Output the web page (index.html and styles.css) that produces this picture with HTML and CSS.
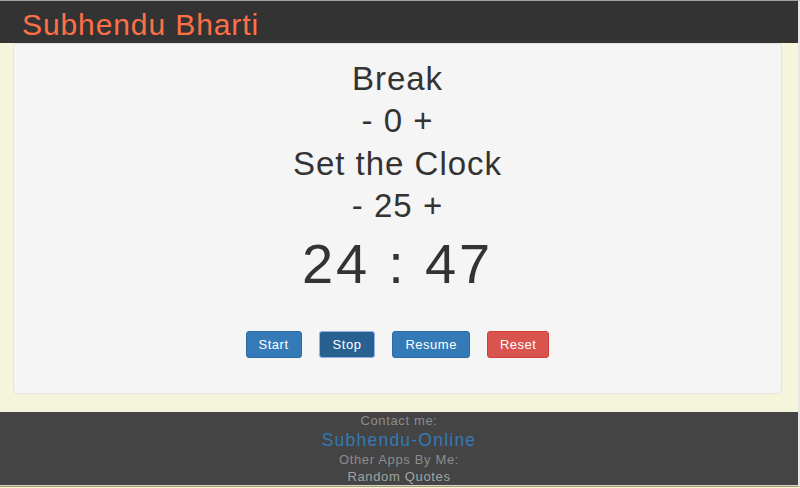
FILE: index.html
```html
<!DOCTYPE html>
<html lang="en">
<head>
<meta charset="utf-8">
<title>Subhendu Bharti - Pomodoro Clock</title>
<link rel="stylesheet" href="styles.css">
</head>
<body>
<header class="topbar">
  <span class="brand">Subhendu Bharti</span>
</header>
<main class="well">
  <div class="label">Break</div>
  <div class="counter"><span class="ctl">-</span> <span class="val">0</span> <span class="ctl">+</span></div>
  <div class="label">Set the Clock</div>
  <div class="counter"><span class="ctl">-</span> <span class="val">25</span> <span class="ctl">+</span></div>
  <div class="clock">24 : 47</div>
  <div class="controls">
    <button class="btn btn-primary">Start</button>
    <button class="btn btn-primary btn-active">Stop</button>
    <button class="btn btn-primary">Resume</button>
    <button class="btn btn-danger">Reset</button>
  </div>
</main>
<footer class="footer">
  <div class="small">Contact me:</div>
  <div class="link-line"><a class="link" href="#">Subhendu-Online</a></div>
  <div class="small">Other Apps By Me:</div>
  <div class="small light">Random Quotes</div>
</footer>
</body>
</html>
```
FILE: styles.css
```css
html {
  background: #f5f5dc;
}
body {
  margin: 0;
  background: #f5f5dc;
  border-top: 1px solid #a0a0a0;
  border-right: 2px solid #e6e6e6;
  border-bottom: 1px solid #a39a5c;
  font-family: "Liberation Sans", Arial, sans-serif;
  color: #333;
}
.topbar {
  height: 42px;
  box-sizing: border-box;
  padding: 6px 0 0 22px;
  background: #333;
}
.brand {
  display: block;
  font-size: 30px;
  line-height: 36px;
  letter-spacing: 0.03em;
  color: #ff6f47;
}
.well {
  margin: 0 16px 18px 13px;
  padding: 14px 0 35px;
  background: #f5f5f5;
  border: 1px solid #e3e3e3;
  border-radius: 4px;
  text-align: center;
}
.label,
.counter {
  font-size: 33px;
  line-height: 42.3px;
  letter-spacing: 0.03em;
}
.clock {
  margin-top: 8px;
  font-size: 56px;
  line-height: 58px;
  letter-spacing: 0.05em;
}
.controls {
  margin-top: 38px;
  display: flex;
  justify-content: center;
  gap: 17px;
}
.btn {
  font-family: "Liberation Sans", Arial, sans-serif;
  font-size: 13px;
  letter-spacing: 0.04em;
  line-height: 19px;
  padding: 3px 12px;
  border: 1px solid transparent;
  border-radius: 3px;
  color: #fff;
  cursor: pointer;
}
.btn-primary {
  background: #337ab7;
  border-color: #2e6da4;
}
.btn-active {
  background: #286090;
  border-color: #8cb3ea;
  padding: 3px 13px;
}
.btn-danger {
  background: #d9534f;
  border-color: #d43f3a;
}
.footer {
  height: 74px;
  box-sizing: border-box;
  background: #444;
  border-bottom: 1px solid #d4d4d4;
  text-align: center;
}
.small {
  font-size: 13px;
  line-height: 17px;
  letter-spacing: 0.05em;
  color: #8c8c8c;
}
.light {
  color: #a3a3a3;
}
.link-line {
  font-size: 17.5px;
  line-height: 22px;
  letter-spacing: 0.07em;
}
.link {
  color: #337ab7;
  text-decoration: none;
}
```
